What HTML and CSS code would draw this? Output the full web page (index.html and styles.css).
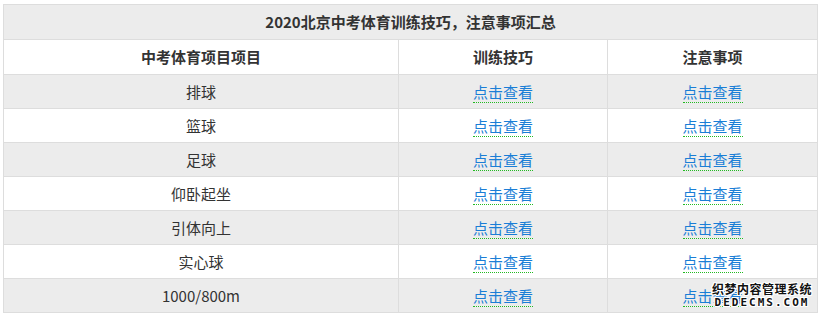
FILE: index.html
```html
<!DOCTYPE html>
<html lang="zh-CN">
<head>
<meta charset="utf-8">
<title>2020北京中考体育训练技巧</title>
<link rel="stylesheet" href="styles.css">
</head>
<body>
<div class="wrap">
<table class="sheet">
  <colgroup>
    <col class="c1">
    <col class="c2">
    <col class="c3">
  </colgroup>
  <thead>
    <tr class="title"><th colspan="3">2020北京中考体育训练技巧，注意事项汇总</th></tr>
    <tr class="head"><th>中考体育项目项目</th><th>训练技巧</th><th>注意事项</th></tr>
  </thead>
  <tbody>
    <tr class="odd"><td>排球</td><td><a href="#">点击查看</a></td><td><a href="#">点击查看</a></td></tr>
    <tr><td>篮球</td><td><a href="#">点击查看</a></td><td><a href="#">点击查看</a></td></tr>
    <tr class="odd"><td>足球</td><td><a href="#">点击查看</a></td><td><a href="#">点击查看</a></td></tr>
    <tr><td>仰卧起坐</td><td><a href="#">点击查看</a></td><td><a href="#">点击查看</a></td></tr>
    <tr class="odd"><td>引体向上</td><td><a href="#">点击查看</a></td><td><a href="#">点击查看</a></td></tr>
    <tr><td>实心球</td><td><a href="#">点击查看</a></td><td><a href="#">点击查看</a></td></tr>
    <tr class="odd"><td>1000/800m</td><td><a href="#">点击查看</a></td><td><a href="#">点击查看</a></td></tr>
  </tbody>
</table>
<div class="mark"><span class="mark-cn">织梦内容管理系统</span><span class="mark-en">DEDECMS.COM</span></div>
</div>
</body>
</html>
```
FILE: styles.css
```css
html, body {
  margin: 0;
  padding: 0;
  background: #fff;
}
body {
  padding: 4px 0 0 3px;
  font-family: "Noto Sans CJK SC", "Microsoft YaHei", sans-serif;
  font-size: 15px;
  color: #333;
}
.wrap {
  position: relative;
  width: 814px;
}
.sheet {
  width: 814px;
  border-collapse: collapse;
  table-layout: fixed;
}
.c1 { width: 395px; }
.c2 { width: 209px; }
.c3 { width: 210px; }
.sheet th, .sheet td {
  border: 1px solid #dddddd;
  text-align: center;
  padding: 0;
  line-height: 20px;
}
.title th {
  background: #ececec;
  height: 34px;
  font-weight: bold;
}
.head th {
  background: #fff;
  height: 34px;
  font-weight: bold;
}
.sheet td {
  height: 33px;
  background: #fff;
}
.sheet tr.odd td {
  background: #ececec;
}
.sheet a {
  color: #1a7ed6;
  text-decoration: none;
  border-bottom: 1px dotted #22bb22;
}
.mark {
  position: absolute;
  right: 5px;
  bottom: 4px;
  display: flex;
  flex-direction: column;
  align-items: center;
  color: #111;
  font-weight: bold;
  text-shadow: 1px 0 0 #fff, -1px 0 0 #fff, 0 1px 0 #fff, 0 -1px 0 #fff, 1px 1px 0 #fff, -1px -1px 0 #fff, 1px -1px 0 #fff, -1px 1px 0 #fff;
}
.mark-cn {
  font-size: 12px;
  line-height: 14px;
  letter-spacing: 0.5px;
}
.mark-en {
  font-family: "DejaVu Sans Mono", monospace;
  font-size: 11px;
  line-height: 13px;
  letter-spacing: 2px;
}
```
